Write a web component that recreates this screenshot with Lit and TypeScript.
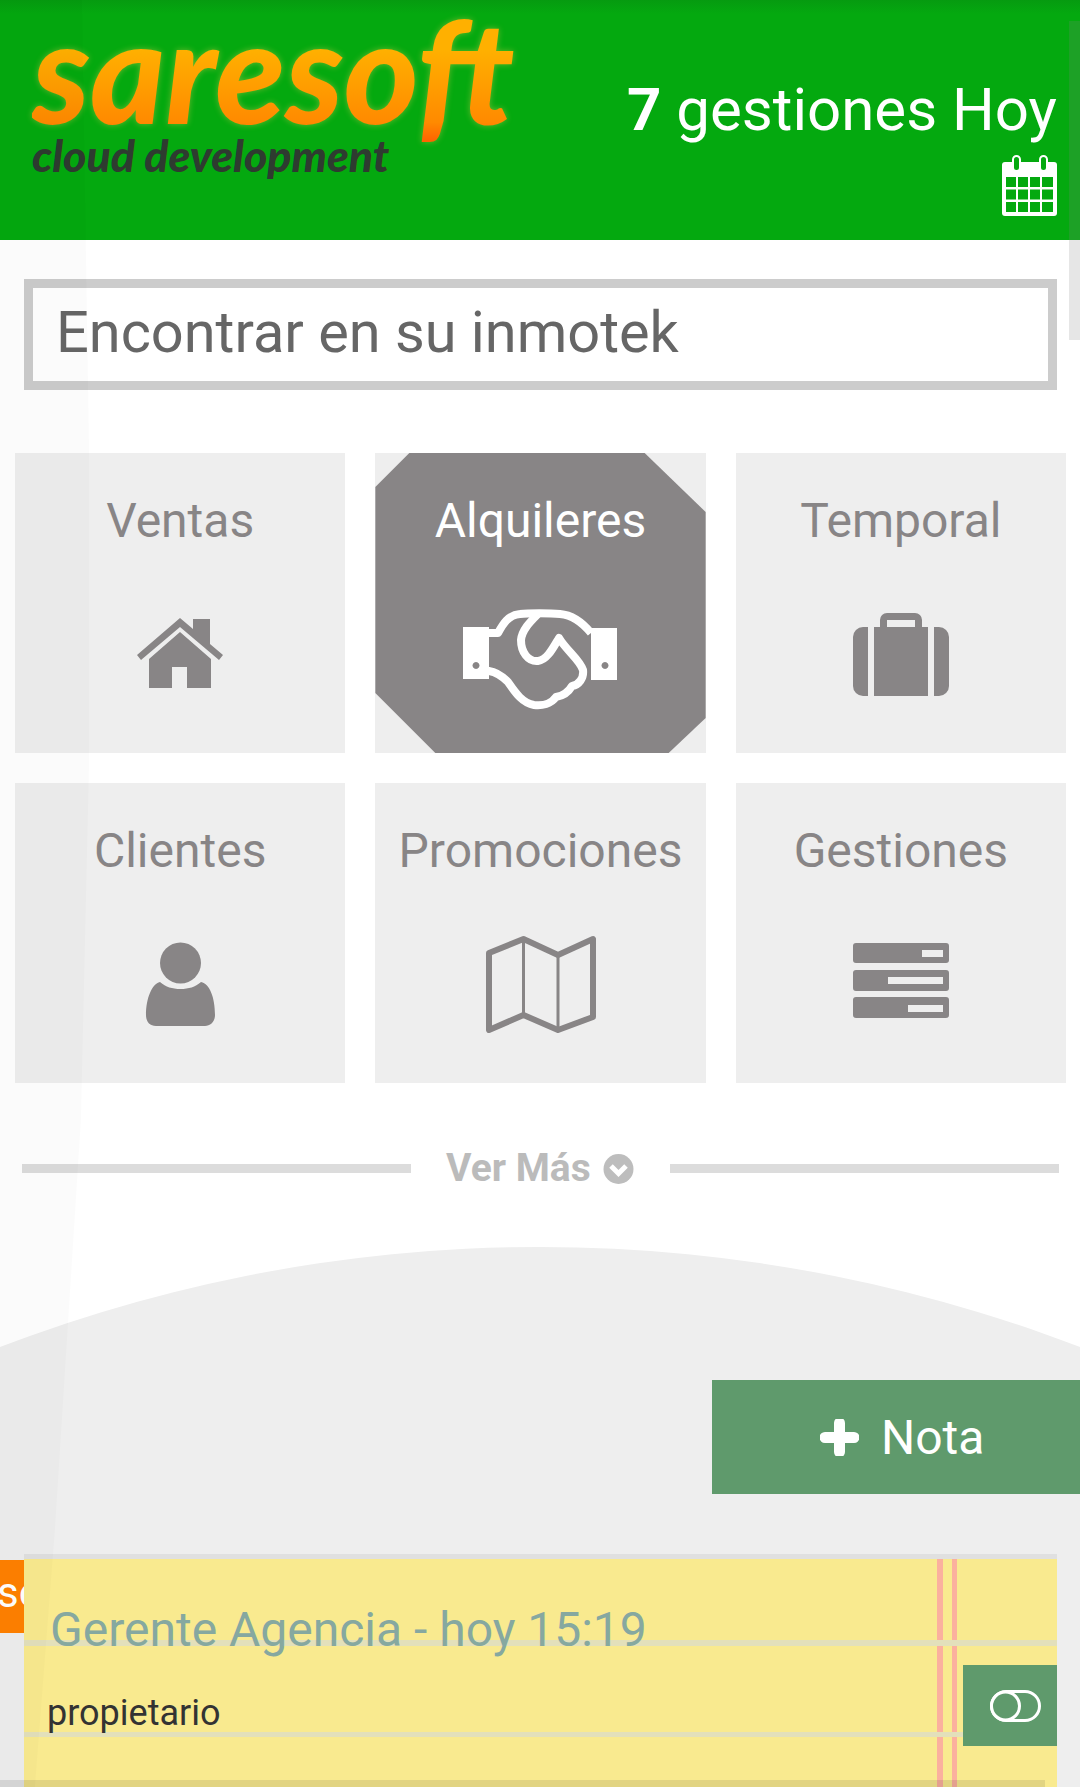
import { LitElement, css, html, svg } from 'lit';
import { customElement } from 'lit/decorators.js';

// icon drawings share a 180x110 box, centred under the label of each card
const ICONS = {
  home: svg`
    <path d="M47 55L90 18L103 29V19H120V44L133 55L129 60L90 27L51 60Z" />
    <path d="M59 59L90 32L121 59V88H97V67H82V88H59Z" />`,
  hands: svg`
    <path d="M13 27H39V79H13ZM26 62a3.500 3.500 0 1 0 .01 0Z" fill-rule="evenodd" />
    <path d="M141 28H167V80H141ZM155 62a3.500 3.500 0 1 0 .01 0Z" fill-rule="evenodd" />
    <path class="line" stroke-width="8" stroke-linejoin="round" d="M39 33H48C53 24 58 15 70 14C78 13 100 13 110 14C122 15 132 22 141 33" />
    <path class="line" stroke-width="8" stroke-linejoin="round" stroke-linecap="round" d="M87 15C80 22 72 30 71 40C71 52 78 62 88 61C97 60 103 48 109 38C116 50 130 60 133 70C134 78 129 85 122 86C118 93 112 96 106 97C101 104 92 106 84 105C72 103 65 92 58 82C52 76 47 72 39 71" />`,
  case: svg`
    <path fill-rule="evenodd" d="M69 27V20a7 7 0 0 1 7-7H104a7 7 0 0 1 7 7V27H104V20H76V27Z" />
    <path d="M63 27H117V96H63Z" />
    <path d="M57 27V96H52a10 10 0 0 1-10-10V37a10 10 0 0 1 10-10Z" />
    <path d="M123 27V96H128a10 10 0 0 0 10-10V37a10 10 0 0 0-10-10Z" />`,
  person: svg`
    <ellipse cx="90.5" cy="33" rx="20.5" ry="20.5" />
    <path d="M70 52C76 57 82 59 90.5 59C99 59 105 57 111 52C120 54 125 68 125 85C125 92 120 96 115 96H66C60 96 56 92 56 85C56 68 62 54 70 52Z" />`,
  map: svg`
    <path class="line" stroke-width="6" stroke-linejoin="round" d="M39 23L73.5 9L108 25L143 9V87L108 100L73.5 85L39 100Z" />
    <path class="line" stroke-width="3" d="M73.5 9V85M108 25V100" />`,
  list: svg`
    <path fill-rule="evenodd" d="M45 13H135a3 3 0 0 1 3 3V30a3 3 0 0 1-3 3H45a3 3 0 0 1-3-3V16a3 3 0 0 1 3-3ZM111 20V27H132V20Z" />
    <path fill-rule="evenodd" d="M45 40H135a3 3 0 0 1 3 3V58a3 3 0 0 1-3 3H45a3 3 0 0 1-3-3V43a3 3 0 0 1 3-3ZM77 47V54H132V47Z" />
    <path fill-rule="evenodd" d="M45 67H135a3 3 0 0 1 3 3V85a3 3 0 0 1-3 3H45a3 3 0 0 1-3-3V70a3 3 0 0 1 3-3ZM97 75V82H132V75Z" />`,
};

const CARDS = [
  { label: 'Ventas', icon: ICONS.home, active: false },
  { label: 'Alquileres', icon: ICONS.hands, active: true },
  { label: 'Temporal', icon: ICONS.case, active: false },
  { label: 'Clientes', icon: ICONS.person, active: false },
  { label: 'Promociones', icon: ICONS.map, active: false },
  { label: 'Gestiones', icon: ICONS.list, active: false },
];

@customElement('app-root')
export class AppRoot extends LitElement {
  render() {
    return html`
      <header class="top">
        <div class="logo">
          <span class="brand">saresoft</span>
          <span class="tagline">cloud development</span>
        </div>
        <div class="today">
          <div class="count"><b>7</b> gestiones Hoy</div>
          <svg class="cal" viewBox="0 0 55 61" width="55" height="61">
            <path fill="#fff" d="M3 7H52a3 3 0 0 1 3 3V58a3 3 0 0 1-3 3H3a3 3 0 0 1-3-3V10a3 3 0 0 1 3-3Z" />
            <rect class="calbg" x="4" y="22" width="10" height="10" />
            <rect class="calbg" x="16" y="22" width="10" height="10" />
            <rect class="calbg" x="28" y="22" width="10" height="10" />
            <rect class="calbg" x="40" y="22" width="11" height="10" />
            <rect class="calbg" x="4" y="34.500" width="10" height="10" />
            <rect class="calbg" x="16" y="34.500" width="10" height="10" />
            <rect class="calbg" x="28" y="34.500" width="10" height="10" />
            <rect class="calbg" x="40" y="34.500" width="11" height="10" />
            <rect class="calbg" x="4" y="47" width="10" height="10" />
            <rect class="calbg" x="16" y="47" width="10" height="10" />
            <rect class="calbg" x="28" y="47" width="10" height="10" />
            <rect class="calbg" x="40" y="47" width="11" height="10" />
            <rect x="11" y="1" width="7" height="15" rx="3.500" fill="#04a90f" stroke="#fff" stroke-width="2" />
            <rect x="38" y="1" width="7" height="15" rx="3.500" fill="#04a90f" stroke="#fff" stroke-width="2" />
          </svg>
        </div>
      </header>

      <div class="search">Encontrar en su inmotek</div>

      <div class="grid">
        ${CARDS.map(
          (c) => html`
            <div class="card ${c.active ? 'active' : ''}">
              <div class="label">${c.label}</div>
              <svg class="icon" viewBox="0 0 180 110" width="180" height="110">${c.icon}</svg>
            </div>
          `
        )}
      </div>

      <div class="more">
        <span class="rule"></span>
        <span class="more-text">Ver Más</span>
        <svg viewBox="0 0 31 30" width="31" height="30">
          <circle cx="15.500" cy="15" r="15" fill="#bdbdbd" />
          <path d="M8 12L15.500 19.500L23 12" fill="none" stroke="#fff" stroke-width="5" />
        </svg>
        <span class="rule right"></span>
      </div>

      <section class="notes">
        <div class="actions">
          <button class="add">
            <svg viewBox="0 0 39 37" width="39" height="37">
              <path d="M19.500 4V33M5 18.500H34" fill="none" stroke="#fff" stroke-width="11" stroke-linecap="round" />
            </svg>
            <span>Nota</span>
          </button>
        </div>
        <div class="tab">so</div>
        <article class="note">
          <div class="who">Gerente Agencia - hoy 15:19</div>
          <div class="what">propietario</div>
          <div class="flip">
            <svg viewBox="0 0 51 32" width="51" height="32">
              <rect x="1.500" y="1.500" width="48" height="29" rx="14.500" fill="none" stroke="#fff" stroke-width="3" />
              <circle cx="15.500" cy="16" r="14" fill="#5f9a6c" stroke="#fff" stroke-width="3" />
            </svg>
          </div>
        </article>
      </section>

      <div class="band"></div>
      <div class="scroll"></div>
      <svg class="strip" viewBox="0 0 1080 1787" width="1080" height="1787">
        <path d="M0 0H82L89 440V770L81 1120L55 1530L35 1787H0Z" />
      </svg>
    `;
  }

  static styles = css`
    :host {
      display: block;
      position: relative;
      height: 1787px;
      overflow: hidden;
      background: #fff;
      font-family: Roboto, 'Liberation Sans', sans-serif;
    }

    .top {
      height: 240px;
      box-sizing: border-box;
      display: flex;
      justify-content: space-between;
      padding: 0 23px 0 32px;
      overflow: hidden;
      background: linear-gradient(#069b10, #04a90f 14px);
    }

    .logo {
      display: flex;
      flex-direction: column;
      align-items: flex-start;
      padding-top: 9px;
      font-family: Lato, 'Liberation Sans', sans-serif;
      font-style: italic;
      font-weight: 900;
    }
    .brand {
      font-size: 143px;
      line-height: 120px;
      padding: 0 10px 20px 0;
      background: linear-gradient(#ffb000 29%, #ff8a00 81%, #ff6400 94%);
      -webkit-background-clip: text;
      background-clip: text;
      color: transparent;
      filter: drop-shadow(0 0 3px rgba(255, 210, 90, 0.4));
    }
    .tagline {
      margin-top: -19px;
      font-size: 44.500px;
      line-height: 50px;
      color: #2e3b30;
    }

    .today {
      display: flex;
      flex-direction: column;
      align-items: flex-end;
      color: #fff;
    }
    .count {
      margin-top: 74px;
      font-size: 60px;
      line-height: 71px;
      white-space: nowrap;
    }
    .count b {
      font-weight: 700;
    }
    .cal {
      margin-top: 10px;
    }
    .calbg {
      fill: #04a90f;
    }

    .search {
      margin: 39px 23px 0 24px;
      height: 111px;
      box-sizing: border-box;
      border: 9px solid #ccc;
      padding-left: 23px;
      font-size: 57.700px;
      line-height: 89px;
      color: #666;
    }

    .grid {
      margin: 63px 14px 0 15px;
      display: grid;
      grid-template-columns: repeat(3, 1fr);
      grid-auto-rows: 300px;
      gap: 30px;
    }
    .card {
      position: relative;
      display: flex;
      flex-direction: column;
      align-items: center;
      background: #eee;
      color: #888586;
    }
    .card.active {
      color: #fff;
    }
    .card.active::before {
      content: '';
      position: absolute;
      inset: 0;
      background: #888586;
      clip-path: polygon(
        34px 0,
        calc(100% - 61px) 0,
        100% 59px,
        100% calc(100% - 35px),
        calc(100% - 37px) 100%,
        60px 100%,
        0 calc(100% - 60px),
        0 34px
      );
    }
    .label {
      position: relative;
      margin-top: 41px;
      font-size: 48px;
      line-height: 54px;
    }
    .icon {
      position: relative;
      margin-top: 52px;
      fill: currentColor;
    }
    .icon .line {
      fill: none;
      stroke: currentColor;
    }

    .more {
      margin: 70px 21px 0 22px;
      height: 31px;
      display: flex;
      align-items: center;
    }
    .rule {
      width: 389px;
      height: 9px;
      background: #dcdcdc;
    }
    .rule.right {
      margin-left: auto;
    }
    .more-text {
      margin: 0 12px 0 35px;
      font-size: 39px;
      font-weight: 700;
      line-height: 31px;
      color: #bbb;
    }

    .notes {
      position: relative;
      margin-top: 63px;
      height: 541px;
      padding-top: 133px;
      box-sizing: border-box;
      background: #eee;
      clip-path: circle(1508px at 540px 1508px);
    }
    .actions {
      display: flex;
      justify-content: flex-end;
    }
    .add {
      width: 368px;
      height: 114px;
      padding: 0 0 0 108px;
      border: 0;
      display: flex;
      align-items: center;
      gap: 22px;
      background: #5f9a6c;
      color: #fff;
      font: inherit;
      font-size: 48px;
    }

    .tab {
      position: absolute;
      left: 0;
      top: 313px;
      width: 60px;
      height: 73px;
      background: #ff8000;
      color: #fff;
      font-size: 42px;
      line-height: 66px;
      text-indent: -3px;
    }

    .note {
      position: relative;
      margin: 60px 23px 0 24px;
      height: 300px;
      border-top: 5px solid #e0e0e0;
      background-color: #f9ea8f;
      background-image: linear-gradient(#e3e0bb, #e3e0bb), linear-gradient(#e3e0bb, #e3e0bb),
        linear-gradient(#fbb09e, #fbb09e), linear-gradient(#fbb09e, #fbb09e);
      background-repeat: no-repeat;
      background-size: 100% 6px, 100% 5px, 6px 100%, 5px 100%;
      background-position: 0 81px, 0 173px, 913px 0, 928px 0;
    }
    .who {
      padding: 44px 0 0 26px;
      font-size: 48px;
      line-height: 53px;
      color: #86a8a0;
    }
    .what {
      padding: 37px 0 0 23px;
      font-size: 36px;
      line-height: 40px;
      color: #333;
    }
    .flip {
      position: absolute;
      right: 0;
      top: 106px;
      width: 94px;
      height: 81px;
      display: flex;
      align-items: center;
      justify-content: center;
      padding-left: 11px;
      box-sizing: border-box;
      background: #5f9a6c;
    }

    .band {
      position: absolute;
      left: 0;
      top: 1780px;
      width: 1045px;
      height: 7px;
      background: rgba(0, 0, 0, 0.09);
    }
    .scroll {
      position: absolute;
      right: 0;
      top: 21px;
      width: 11px;
      height: 319px;
      background: rgba(128, 128, 128, 0.2);
    }
    .strip {
      position: absolute;
      left: 0;
      top: 0;
      fill: rgba(0, 0, 0, 0.016);
    }
  `;
}

declare global {
  interface HTMLElementTagNameMap {
    'app-root': AppRoot;
  }
}
